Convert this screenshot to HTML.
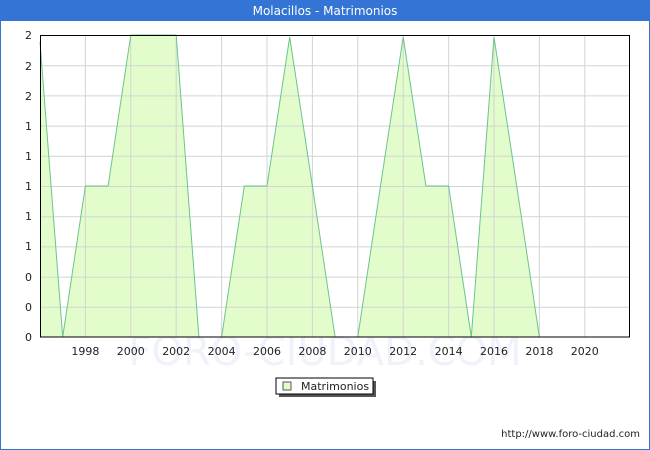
<!DOCTYPE html>
<html><head><style>
body{margin:0;width:650px;height:450px;overflow:hidden;background:#fff;font-family:"DejaVu Sans","Liberation Sans",sans-serif}
.frame{position:absolute;left:0;top:0;width:648px;height:448px;border:1px solid #3474d4}
.title{position:absolute;left:0;top:0;width:650px;height:21px;background:#3474d4;color:#fff;font-size:12px;text-align:center;line-height:22px}
</style></head><body>
<div class="frame"></div>
<div class="title">Molacillos - Matrimonios</div>
<svg width="650" height="450" style="position:absolute;left:0;top:0" font-family="DejaVu Sans, Liberation Sans, sans-serif" font-size="11">
<text x="325" y="365" font-size="40" fill="#f0f2fb" text-anchor="middle">FORO-CIUDAD.COM</text>
<polygon fill="#e2fccc" stroke="none" points="40,42 62.7,337 85.4,186 108.1,186 130.8,35 153.5,35 176.2,35 198.9,337 221.6,337 244.3,186 267,186 289.7,37 312.4,186 335.1,337 357.8,337 380.5,186 403.2,37 425.9,186 448.6,186 471.3,337 494,37 516.7,186 539.4,337 630,337 40,337"/>
<g stroke="#d4d4d4" stroke-width="1">
<line x1="40" y1="65.7" x2="630" y2="65.7"/><line x1="40" y1="95.9" x2="630" y2="95.9"/><line x1="40" y1="126.1" x2="630" y2="126.1"/><line x1="40" y1="156.3" x2="630" y2="156.3"/><line x1="40" y1="186.5" x2="630" y2="186.5"/><line x1="40" y1="216.7" x2="630" y2="216.7"/><line x1="40" y1="246.9" x2="630" y2="246.9"/><line x1="40" y1="277.1" x2="630" y2="277.1"/><line x1="40" y1="307.3" x2="630" y2="307.3"/>
<line x1="85.4" y1="35" x2="85.4" y2="337"/><line x1="130.8" y1="35" x2="130.8" y2="337"/><line x1="176.2" y1="35" x2="176.2" y2="337"/><line x1="221.6" y1="35" x2="221.6" y2="337"/><line x1="267" y1="35" x2="267" y2="337"/><line x1="312.4" y1="35" x2="312.4" y2="337"/><line x1="357.8" y1="35" x2="357.8" y2="337"/><line x1="403.2" y1="35" x2="403.2" y2="337"/><line x1="448.6" y1="35" x2="448.6" y2="337"/><line x1="494" y1="35" x2="494" y2="337"/><line x1="539.4" y1="35" x2="539.4" y2="337"/><line x1="584.8" y1="35" x2="584.8" y2="337"/>
</g>
<polyline fill="none" stroke="#6cc48c" stroke-width="1" points="40,42 62.7,337 85.4,186 108.1,186 130.8,35 153.5,35 176.2,35 198.9,337 221.6,337 244.3,186 267,186 289.7,37 312.4,186 335.1,337 357.8,337 380.5,186 403.2,37 425.9,186 448.6,186 471.3,337 494,37 516.7,186 539.4,337"/>
<rect x="40.5" y="35.5" width="589" height="301.5" fill="none" stroke="#000" stroke-width="1"/>
<g fill="#222" text-anchor="end">
<text x="32" y="39">2</text><text x="32" y="70">2</text><text x="32" y="100">2</text><text x="32" y="130">1</text><text x="32" y="160">1</text><text x="32" y="190">1</text><text x="32" y="220">1</text><text x="32" y="250">1</text><text x="32" y="281">0</text><text x="32" y="311">0</text><text x="32" y="341">0</text>
</g>
<g fill="#222" text-anchor="middle">
<text x="85.4" y="355">1998</text><text x="130.8" y="355">2000</text><text x="176.2" y="355">2002</text><text x="221.6" y="355">2004</text><text x="267" y="355">2006</text><text x="312.4" y="355">2008</text><text x="357.8" y="355">2010</text><text x="403.2" y="355">2012</text><text x="448.6" y="355">2014</text><text x="494" y="355">2016</text><text x="539.4" y="355">2018</text><text x="584.8" y="355">2020</text>
</g>
<rect x="279" y="381" width="97" height="16" fill="#555"/>
<rect x="276" y="378" width="97" height="16" fill="#fff" stroke="#000" stroke-width="1"/>
<rect x="283" y="382" width="8" height="8" fill="#e2fccc" stroke="#555"/>
<text x="301" y="390" fill="#222">Matrimonios</text>
<text x="640" y="437" text-anchor="end" font-size="10" fill="#222">http://www.foro-ciudad.com</text>
</svg>
</body></html>
